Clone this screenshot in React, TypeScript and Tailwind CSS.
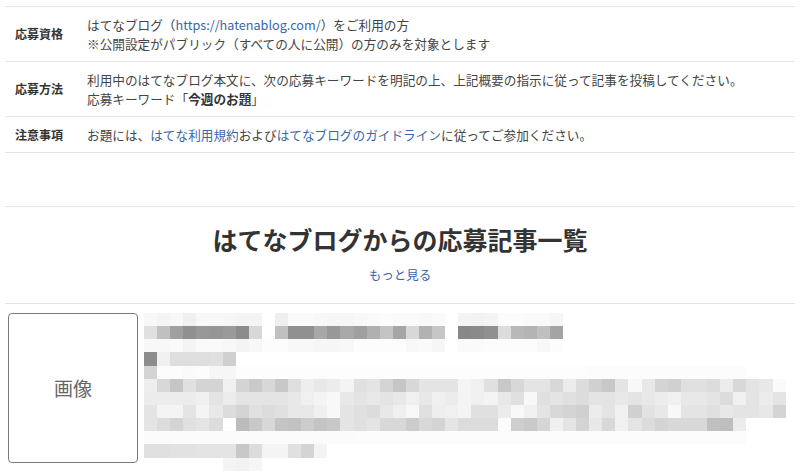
const font = "font-['Noto_Sans_CJK_JP','Noto_Sans',sans-serif]";

// mosaic (pixelated preview of the entry), grey levels per 13px cell
const mosaic: string[][] = [
  'f8 f4 f8 f0 f8 f8 f6 f4 f4 ff ee fa fa f8 f6 f6 f8 fa fc fa fa f8 fa ff f4 f2 f4 fc fc fa fa f6'.split(' '),
  'e0 c0 a0 90 98 96 9a 8c d8 ff c0 90 90 a8 98 a8 a0 b0 c4 a6 d8 b2 c6 ff 88 8a 90 dc b8 b4 c0 a4'.split(' '),
  'f8 f8 fa f4 fa fa f8 f4 f8 fc fc f8 f8 f6 f6 f8 fc fc fc fc f8 fa f6 ff fa fa fc fc fc fc f8 fc'.split(' '),
  '8c f0 de de de e0 d0'.split(' '),
  'd4 fc fc fa fc f6 f6 fd fd fd fd fd fd fd fd fd fd fd fd fd fd fd fd fd fd fd fd fd fd fd fd fd fd fd fc fc fc fc fc fc fc fc fc fc fc fc'.split(' '),
  'ee d8 c6 e0 d4 d4 f0 d4 ca d8 c8 de ee e8 ec f4 e0 e4 d4 c6 d8 e4 e4 e4 f4 f0 e0 c8 d8 e4 e4 d8 ec dc d0 c8 e4 f8 e8 d4 d0 e0 e0 dc ec d8 e4 e8 fa'.split(' '),
  'ec ec ec ec f0 e4 ec e4 e4 e4 e4 e8 f0 f4 f8 e8 e4 e8 e4 e8 f0 e8 f0 ec f4 f0 f4 e8 e0 f8 e0 e4 e0 dc e4 e4 e8 e4 e8 ec f0 e8 e8 e4 dc f0 e4 ec e4'.split(' '),
  'e4 f4 f4 e4 f4 e8 dc d4 e0 dc e0 e8 e8 f0 f8 e4 e0 dc e8 f0 f8 e0 ee f0 f4 e0 e0 ec f8 f0 e4 d8 d4 d0 ec e4 f0 d0 e2 e8 f8 e4 e4 e0 e8 e4 e4 e8 d4'.split(' '),
  'e4 dc d4 e0 e4 dc ff bc c8 d8 c4 c2 cc c4 c8 e4 e0 e4 d8 d8 cc d8 d4 e4 dc dc dc fc ce ca d6 f0 e4 d4 e8 d8 f0 e4 dc d4 d8 d8 d8 c0 be ec'.split(' '),
  'fb fb fb fb fb fb fb fb fb fb fb fb fb fb fb fb fc fc fc fc fc fc fc fc fc fc fc fc fc fc fc fc fc fc fc fc fc fc fc fc fc fc fc fc fc fc'.split(' '),
  'e0 e0 e2 e2 e4 e4 e4 c8 dc f4 f4 e0 d4 f4'.split(' '),
  'ff ff ff ff ff ff f4 f2 f6'.split(' '),
];

function Mosaic() {
  return (
    <div className="flex flex-col">
      {mosaic.map((row, i) => (
        <div key={i} className="flex h-[13.15px]">
          {row.map((g, j) => (
            <div key={j} className="w-[13.1px] h-full" style={{ background: `#${g}${g}${g}` }} />
          ))}
        </div>
      ))}
    </div>
  );
}

function Row({ label, children }: { label: string; children: React.ReactNode }) {
  return (
    <div className="flex border-b border-[#e5e5e5] py-2">
      <div className="w-[82px] shrink-0 pl-[10px] flex items-center text-[12px] font-bold text-[#333]">{label}</div>
      <div className="text-[12.65px] leading-[19px] text-[#444]">{children}</div>
    </div>
  );
}

export default function App() {
  return (
    <div className={`w-[800px] h-[473px] overflow-hidden bg-white ${font}`}>
      <div className="pt-[6px] px-[5px]">
        <div className="border-t border-[#e5e5e5]">
          <Row label="応募資格">
            <div>
              はてなブログ（<span className="text-[#3a66a8]">https://hatenablog.com/</span>）をご利用の方
            </div>
            <div>※公開設定がパブリック（すべての人に公開）の方のみを対象とします</div>
          </Row>
          <Row label="応募方法">
            <div>利用中のはてなブログ本文に、次の応募キーワードを明記の上、上記概要の指示に従って記事を投稿してください。</div>
            <div>
              応募キーワード「<span className="font-bold text-[#333]">今週のお題</span>」
            </div>
          </Row>
          <Row label="注意事項">
            <div>
              お題には、<span className="text-[#3a66a8]">はてな利用規約</span>および
              <span className="text-[#3a66a8]">はてなブログのガイドライン</span>に従ってご参加ください。
            </div>
          </Row>
        </div>

        <div className="mt-[53px] border-t border-b border-[#e5e5e5] pt-[15px] pb-[19px] flex flex-col items-center">
          <h2 className="text-[25px] leading-[34px] font-bold text-[#333]">はてなブログからの応募記事一覧</h2>
          <a className="mt-[9px] text-[12.5px] leading-[19px] text-[#3a66a8]">もっと見る</a>
        </div>
      </div>

      <div className="flex pl-[8px] pt-[9px] gap-[6px]">
        <div className="w-[130px] h-[150px] shrink-0 rounded-[4px] border border-[#7a7a7a] flex items-center justify-center text-[19px] text-[#666]">
          画像
        </div>
        <div>
          <Mosaic />
        </div>
      </div>
    </div>
  );
}
